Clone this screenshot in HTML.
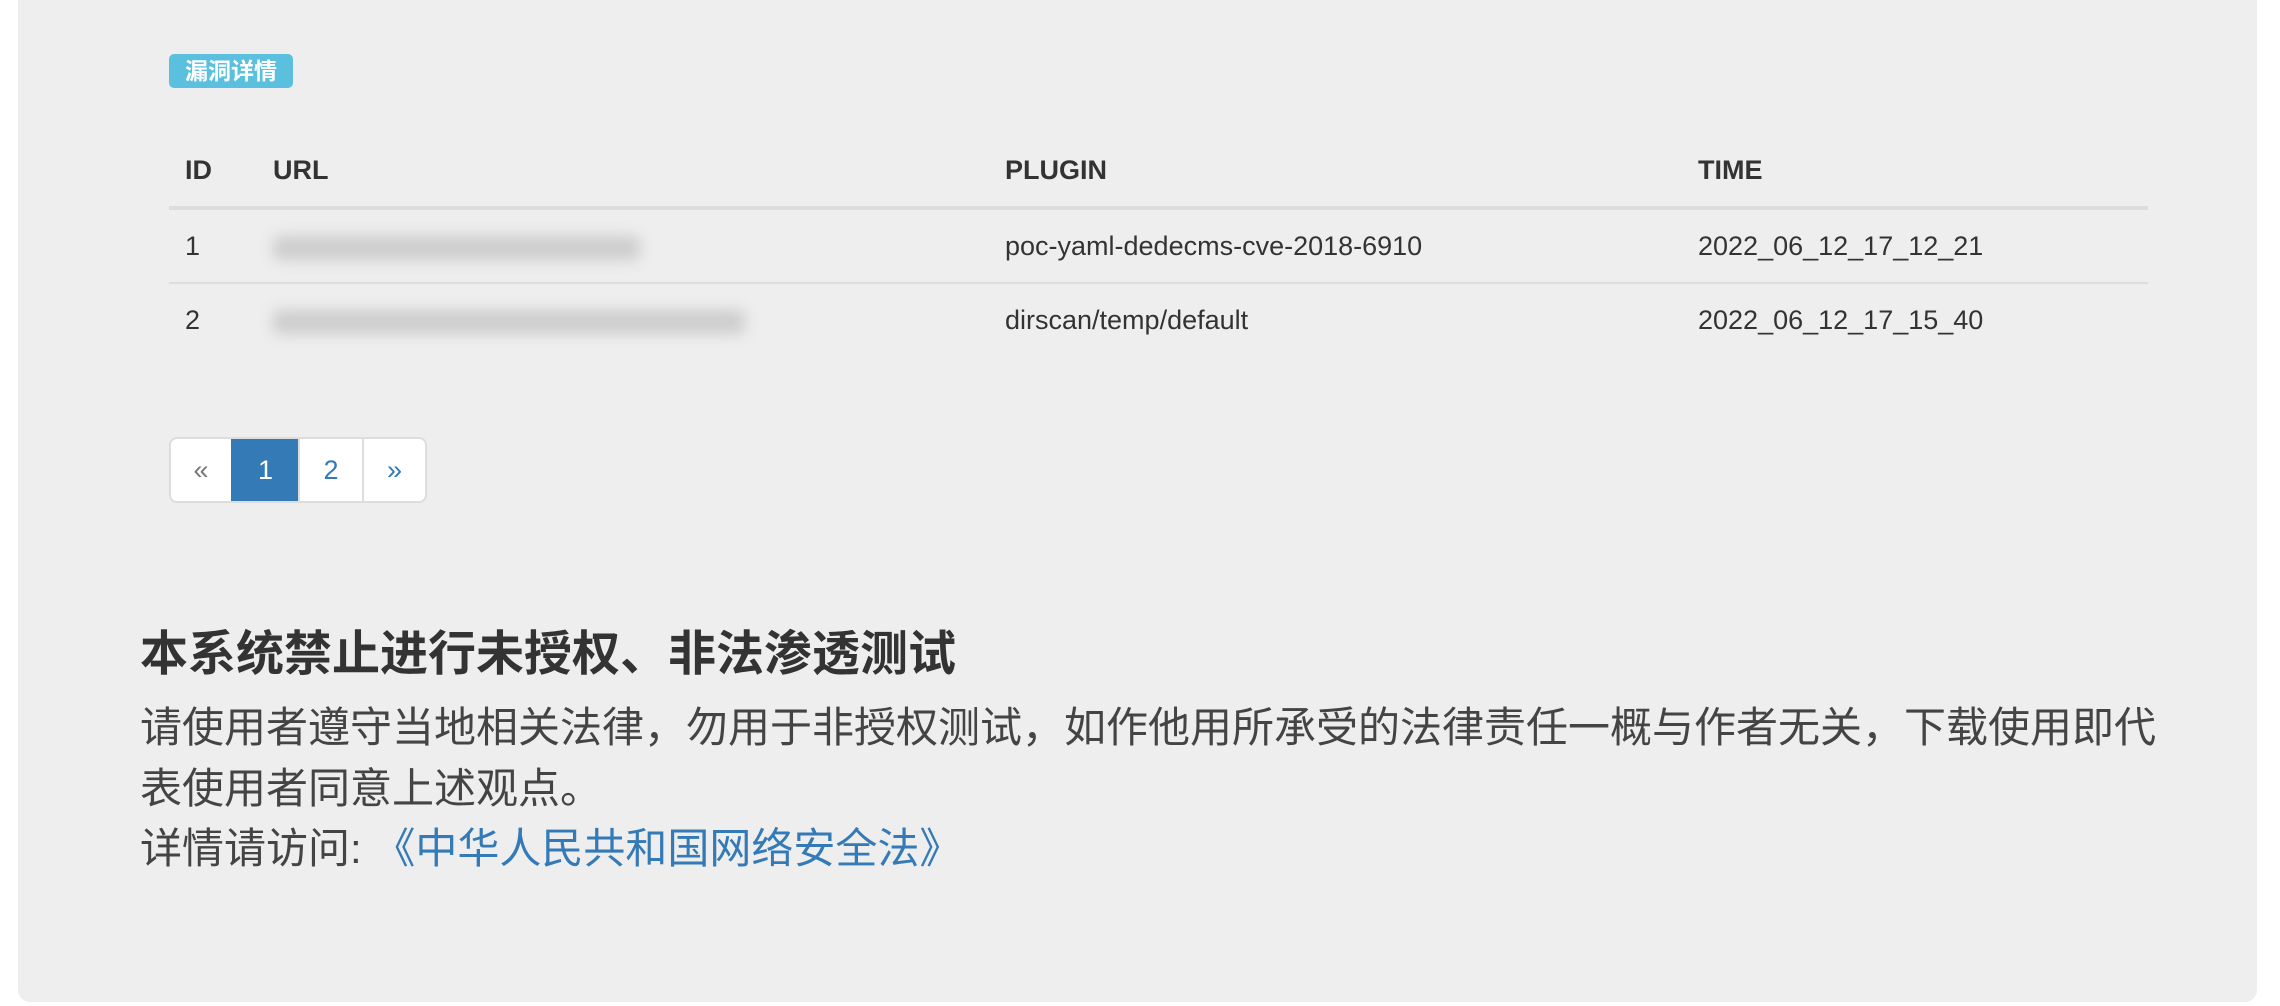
<!DOCTYPE html>
<html><head><meta charset="utf-8"><style>
*{margin:0;padding:0;box-sizing:border-box}
body{width:2280px;height:1006px;background:#fff;font-family:"Liberation Sans","Noto Sans CJK SC",sans-serif;color:#333;position:relative;overflow:hidden}
.jt{position:absolute;left:18px;top:-20px;width:2239px;height:1022px;background:#eee;border-radius:12px}
.badge{position:absolute;left:169px;top:54px;height:34px;padding:0 16px;background:#5bc0de;color:#fff;font-weight:bold;font-size:23px;line-height:34px;border-radius:5px}
table{position:absolute;left:169px;top:134px;width:1979px;border-collapse:collapse;font-size:27px}
th,td{padding:16px;line-height:40px;text-align:left}
th{border-bottom:4px solid #ddd;font-weight:bold}
tr.r1 td{border-bottom:2px solid #ddd}
.blur{display:inline-block;height:24px;background:#cdcdcd;filter:blur(7px);vertical-align:middle;border-radius:6px}
.pg{position:absolute;left:169px;top:437px;height:66px;display:flex;border:2px solid #ddd;border-radius:8px;overflow:hidden;background:#fff}
.pg div{height:100%;display:flex;align-items:center;justify-content:center;font-size:27px;color:#337ab7;border-left:2px solid #ddd}
.pg div:first-child{border-left:none;color:#777}
.pg .a{background:#337ab7;color:#fff;border-color:#337ab7}
h3{position:absolute;left:140px;top:622px;font-size:48px;line-height:66px;font-weight:bold;color:#333}
p{position:absolute;left:140px;top:698px;width:2040px;font-size:42px;line-height:60.5px;color:#444}
a{color:#337ab7;text-decoration:none}
</style></head><body>
<div class="jt"></div>
<div class="badge">漏洞详情</div>
<table>
<tr><th style="width:88px">ID</th><th style="width:732px">URL</th><th style="width:693px">PLUGIN</th><th>TIME</th></tr>
<tr class="r1"><td>1</td><td><span class="blur" style="width:367px"></span></td><td>poc-yaml-dedecms-cve-2018-6910</td><td>2022_06_12_17_12_21</td></tr>
<tr><td>2</td><td><span class="blur" style="width:472px"></span></td><td>dirscan/temp/default</td><td>2022_06_12_17_15_40</td></tr>
</table>
<div class="pg"><div style="width:60px">«</div><div class="a" style="width:67px">1</div><div style="width:64px">2</div><div style="width:63px">»</div></div>
<h3>本系统禁止进行未授权、非法渗透测试</h3>
<p>请使用者遵守当地相关法律，勿用于非授权测试，如作他用所承受的法律责任一概与作者无关，下载使用即代表使用者同意上述观点。<br>详情请访问: <a>《中华人民共和国网络安全法》</a></p>
</body></html>
